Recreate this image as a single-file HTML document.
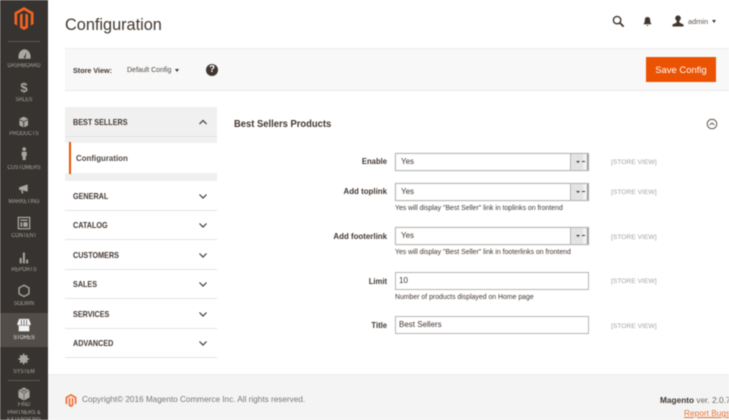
<!DOCTYPE html>
<html><head><meta charset="utf-8"><style>
html,body{margin:0;padding:0;background:#fff}
body{width:729px;height:420px;overflow:hidden;position:relative;font-family:"Liberation Sans",sans-serif;color:#41362f}
#w{position:absolute;left:0;top:0;width:729px;height:420px;overflow:hidden;filter:blur(.4px)}
.a{position:absolute;white-space:nowrap}
.nl{position:absolute;left:0;width:48px;margin-top:1px;text-align:center;font-size:6px;color:#aaa6a0;line-height:8px;transform:scaleX(.87);white-space:nowrap}
.nv{position:absolute;left:0;top:0;width:48px;height:420px;background:#373330}
.ni{position:absolute;left:17.3px;width:13.4px;height:12px}
.sec{position:absolute;left:73px;font-size:8.3px;font-weight:bold;color:#41362f;line-height:12px;transform:scaleX(.87);transform-origin:left;white-space:nowrap}
.row{position:absolute;left:65px;width:152px;height:1px;background:#e3e3e3}
.chev{position:absolute;left:198px;width:10px;height:6px}
.lab{position:absolute;width:157px;left:230px;text-align:right;font-size:8.6px;font-weight:bold;color:#41362f;line-height:12px;transform:scaleX(.89);transform-origin:right;white-space:nowrap}
.inp{position:absolute;left:395px;width:192px;height:16px;border:1px solid #b5b5b5;background:#fff;font-size:8px;line-height:16px;text-indent:3px;color:#41362f}
.sel{text-indent:5px;box-shadow:0 0 1px #ccc}
.btn{position:absolute;left:570px;width:18px;height:16px;background:linear-gradient(90deg,#e3e3e3 0,#e3e3e3 72%,#f1f1f1 72%,#f1f1f1 94%,#8d8d8d 94%);border-left:1px solid #b5b5b5;box-sizing:border-box}
.note{position:absolute;left:395px;font-size:6.9px;color:#41362f;line-height:10px;white-space:nowrap}
.sv{position:absolute;left:611px;font-size:6.7px;color:#a4a4a4;line-height:10px;white-space:nowrap}
</style></head><body><div id="w">
<div class="nv"></div>
<svg class="a" style="left:14px;top:7px" width="20" height="23" viewBox="0 0 20 23"><path d="M10 0L19.5 5.5V17L16.8 18.6V7L10 3.1 3.2 7V18.6L.5 17V5.5Z" fill="#f26322"/><path d="M10 23L6 20.7V7.8L8.6 6.4V19L10 19.8 11.4 19V6.4L14 7.8V20.7Z" fill="#f26322"/></svg>
<div class="a" style="left:8px;top:41px;width:32px;height:1px;background:#5c5854"></div>

<svg class="ni" style="left:15.5px;top:46px;width:17px;height:15.3px" viewBox="0 0 20 18"><path d="M3 15A7.2 9 0 1 1 17 15Z" fill="#aaa6a0"/><path d="M9 14L12.5 7 11 14.5Z" fill="#373330"/></svg>
<div class="nl" style="top:61px">DASHBOARD</div>
<div class="a" style="left:0;width:48px;top:80px;text-align:center;font-size:13px;font-weight:bold;color:#aaa6a0;line-height:15px">$</div>
<div class="nl" style="top:95px">SALES</div>
<svg class="ni" style="top:115.5px" viewBox="0 0 20 18"><path d="M10 1L17 4.5 10 8 3 4.5Z" fill="#aaa6a0"/><path d="M3.5 6L9.3 9V17L3.5 14ZM16.5 6L10.7 9V17L16.5 14Z" fill="#aaa6a0"/></svg>
<div class="nl" style="top:129px">PRODUCTS</div>
<svg class="ni" style="left:16.8px;top:147px;width:14.4px;height:13px" viewBox="0 0 20 18"><circle cx="10" cy="3" r="2.6" fill="#aaa6a0"/><path d="M6.5 6.5H13.5V12.5H12.2V18H7.8V12.5H6.5Z" fill="#aaa6a0"/></svg>
<div class="nl" style="top:163px">CUSTOMERS</div>
<svg class="ni" style="top:183px" viewBox="0 0 20 18"><path d="M3 6.5L16 2V13L3 10Z" fill="#aaa6a0"/><path d="M6 11L8.5 11.5 9.5 15.5 7 15.5Z" fill="#aaa6a0"/></svg>
<div class="nl" style="top:197px">MARKETING</div>
<svg class="ni" style="left:15px;top:215px;width:18px;height:16.2px" viewBox="0 0 20 18"><rect x="3.7" y="2.7" width="12.6" height="12.6" fill="none" stroke="#aaa6a0" stroke-width="1.4"/><path d="M6 5H14V6.5H6ZM6 8H8V13H6ZM9.2 8H14V13H9.2Z" fill="#aaa6a0"/></svg>
<div class="nl" style="top:231px">CONTENT</div>
<svg class="ni" style="top:251.5px" viewBox="0 0 20 18"><path d="M4 9H7V17H4ZM8.8 1H11.8V17H8.8ZM13.6 11.5H16.6V17H13.6Z" fill="#aaa6a0"/></svg>
<div class="nl" style="top:265px">REPORTS</div>
<svg class="ni" style="left:15px;top:283px;width:18px;height:16.2px" viewBox="0 0 20 18"><path d="M10 2.5L15.5 5.5V12L10 15 4.5 12V5.5Z" fill="none" stroke="#aaa6a0" stroke-width="1.5"/></svg>
<div class="nl" style="top:299px">SOLWIN</div>
<div class="a" style="left:0;top:313px;width:48px;height:34px;background:#524d49"></div>
<svg class="ni" style="left:15px;top:318px;width:18px;height:16px" viewBox="0 0 20 18"><path d="M4.5 1H15.5L17.5 6.5V8H2.5V6.5Z" fill="#f3f3f3"/><path d="M4 8.5H16V15H4Z" fill="#f3f3f3"/><path d="M7 2V8M10 2V8M13 2V8" stroke="#524d49" stroke-width=".8"/></svg>
<div class="nl" style="top:333px;color:#f0efee">STORES</div>
<svg class="ni" style="top:353px" viewBox="0 0 20 18"><circle cx="10" cy="9" r="4.5" fill="none" stroke="#aaa6a0" stroke-width="3"/><path d="M10 1V17M2 9H18M4.5 3.5L15.5 14.5M15.5 3.5L4.5 14.5" stroke="#aaa6a0" stroke-width="2.2"/></svg>
<div class="nl" style="top:367px">SYSTEM</div>
<div class="a" style="left:8px;top:380px;width:32px;height:1px;background:#5c5854"></div>
<svg class="ni" style="left:16px;top:386.5px;width:16px;height:14.4px" viewBox="0 0 20 18"><path d="M10 .5L17 4V13L10 17 3 13V4Z" fill="#aaa6a0"/><path d="M3 4L10 8 17 4M10 8V17M6 2.5L13 6M14 2.5L7 6" stroke="#373330" stroke-width=".6" fill="none"/></svg>
<div class="nl" style="top:400px">FIND</div>
<div class="nl" style="top:407.5px">PARTNERS &amp;</div>
<div class="nl" style="top:415px">EXTENSIONS</div>

<div class="a" style="left:65px;top:14px;font-size:16.3px;line-height:22px;color:#41362f">Configuration</div>
<svg class="a" style="left:612px;top:15px" width="13" height="13" viewBox="0 0 14 14"><circle cx="5.5" cy="5.5" r="4" fill="none" stroke="#41362f" stroke-width="1.5"/><path d="M8.5 8.5L12.5 12.5" stroke="#41362f" stroke-width="2"/></svg>
<svg class="a" style="left:643px;top:16px" width="9" height="11" viewBox="0 0 10 12"><path d="M5 1C7.5 1 8 3 8 5C8 7 9 8 9.5 9H.5C1 8 2 7 2 5C2 3 2.5 1 5 1Z" fill="#41362f"/><path d="M3.7 10H6.3L5 11.3Z" fill="#41362f"/></svg>
<svg class="a" style="left:672px;top:15px" width="12" height="12" viewBox="0 0 12 12"><circle cx="6" cy="3.2" r="2.8" fill="#41362f"/><path d="M4.6 5.5H7.4V7.5L11.5 9.5V11.5H.5V9.5L4.6 7.5Z" fill="#41362f"/></svg>
<div class="a" style="left:688px;top:16.5px;font-size:7.4px;color:#5c5450;line-height:10px">admin</div>
<div class="a" style="left:712px;top:20px;width:0;height:0;border:2.5px solid transparent;border-top:3px solid #41362f;border-bottom:0"></div>

<div class="a" style="left:65px;top:48px;width:664px;height:43px;background:#f8f8f8;border-top:1px solid #efefef;border-bottom:1px solid #e9e9e9;box-sizing:border-box"></div>
<div class="a" style="left:73px;top:65.5px;font-size:7.2px;font-weight:bold;line-height:10px;color:#41362f">Store View:</div>
<div class="a" style="left:127px;top:65.5px;font-size:7px;line-height:10px;color:#514943">Default Config</div>
<div class="a" style="left:175px;top:69px;width:0;height:0;border:2.8px solid transparent;border-top:3px solid #41362f;border-bottom:0"></div>
<div class="a" style="left:206px;top:63.5px;width:12px;height:12px;border-radius:50%;background:#41362f;color:#fff;text-align:center;font-size:10px;font-weight:bold;line-height:12px">?</div>
<div class="a" style="left:646px;top:57px;width:70px;height:25px;background:#eb5202;border:0;color:#fff;text-align:center;font-size:9.4px;line-height:25px;letter-spacing:.05px">Save Config</div>

<div class="a" style="left:65px;top:107px;width:152px;height:74px;background:#f0f0f0"></div>
<div class="row" style="top:136px"></div>
<div class="sec" style="top:116px">BEST SELLERS</div>
<svg class="chev" style="top:119px" viewBox="0 0 10 6"><path d="M1.5 5L5 1.5 8.5 5" fill="none" stroke="#41362f" stroke-width="1.2"/></svg>
<div class="a" style="left:65px;top:142.5px;width:152px;height:30.5px;background:#fff"></div>
<div class="a" style="left:69px;top:142px;width:2px;height:32px;background:#eb5202"></div>
<div class="a" style="left:76px;top:152px;font-size:8.6px;font-weight:bold;line-height:12px;color:#514943;transform:scaleX(.92);transform-origin:left">Configuration</div>

<div class="a" style="left:65px;top:181px;width:152px;height:177px;background:#fff"></div>
<div class="sec" style="top:189.5px">GENERAL</div>
<svg class="chev" style="top:193px" viewBox="0 0 10 6"><path d="M1.5 1.5L5 5 8.5 1.5" fill="none" stroke="#41362f" stroke-width="1.2"/></svg>
<div class="row" style="top:210px"></div>
<div class="sec" style="top:219px">CATALOG</div>
<svg class="chev" style="top:222px" viewBox="0 0 10 6"><path d="M1.5 1.5L5 5 8.5 1.5" fill="none" stroke="#41362f" stroke-width="1.2"/></svg>
<div class="row" style="top:239px"></div>
<div class="sec" style="top:248.5px">CUSTOMERS</div>
<svg class="chev" style="top:252px" viewBox="0 0 10 6"><path d="M1.5 1.5L5 5 8.5 1.5" fill="none" stroke="#41362f" stroke-width="1.2"/></svg>
<div class="row" style="top:269px"></div>
<div class="sec" style="top:278px">SALES</div>
<svg class="chev" style="top:281px" viewBox="0 0 10 6"><path d="M1.5 1.5L5 5 8.5 1.5" fill="none" stroke="#41362f" stroke-width="1.2"/></svg>
<div class="row" style="top:298px"></div>
<div class="sec" style="top:307.5px">SERVICES</div>
<svg class="chev" style="top:311px" viewBox="0 0 10 6"><path d="M1.5 1.5L5 5 8.5 1.5" fill="none" stroke="#41362f" stroke-width="1.2"/></svg>
<div class="row" style="top:328px"></div>
<div class="sec" style="top:336.5px">ADVANCED</div>
<svg class="chev" style="top:340px" viewBox="0 0 10 6"><path d="M1.5 1.5L5 5 8.5 1.5" fill="none" stroke="#41362f" stroke-width="1.2"/></svg>
<div class="row" style="top:357px"></div>

<div class="a" style="left:234px;top:118px;font-size:9.8px;font-weight:bold;line-height:13px;color:#41362f;transform:scaleX(.96);transform-origin:left">Best Sellers Products</div>
<svg class="a" style="left:706px;top:118px" width="12" height="12" viewBox="0 0 12 12"><circle cx="6" cy="6" r="4.8" fill="none" stroke="#5f5750" stroke-width="1"/><path d="M3.8 7L6 4.8 8.2 7" fill="none" stroke="#5f5750" stroke-width="1"/></svg>

<div class="lab" style="top:155px">Enable</div>
<div class="inp sel" style="top:153px">Yes</div>
<div class="btn" style="top:154px"></div>
<div class="a" style="left:576px;top:161px;width:0;height:0;border:2px solid transparent;border-top:2.5px solid #41362f;border-bottom:0"></div>
<div class="a" style="left:582px;top:160.5px;width:3px;height:1.5px;background:#41362f"></div>
<div class="sv" style="top:158px">[STORE VIEW]</div>

<div class="lab" style="top:185px;transform:scaleX(.92)">Add toplink</div>
<div class="inp sel" style="top:183px">Yes</div>
<div class="btn" style="top:184px"></div>
<div class="a" style="left:576px;top:191px;width:0;height:0;border:2px solid transparent;border-top:2.5px solid #41362f;border-bottom:0"></div>
<div class="a" style="left:582px;top:190.5px;width:3px;height:1.5px;background:#41362f"></div>
<div class="note" style="top:204px">Yes will display "Best Seller" link in toplinks on frontend</div>
<div class="sv" style="top:188px">[STORE VIEW]</div>

<div class="lab" style="top:230px;transform:scaleX(.92)">Add footerlink</div>
<div class="inp sel" style="top:227px">Yes</div>
<div class="btn" style="top:228px"></div>
<div class="a" style="left:576px;top:235px;width:0;height:0;border:2px solid transparent;border-top:2.5px solid #41362f;border-bottom:0"></div>
<div class="a" style="left:582px;top:234.5px;width:3px;height:1.5px;background:#41362f"></div>
<div class="note" style="top:248px">Yes will display "Best Seller" link in footerlinks on frontend</div>
<div class="sv" style="top:233px">[STORE VIEW]</div>

<div class="lab" style="top:275px">Limit</div>
<div class="inp" style="top:272px">10</div>
<div class="note" style="top:293px">Number of products displayed on Home page</div>
<div class="sv" style="top:277px">[STORE VIEW]</div>

<div class="lab" style="top:319px">Title</div>
<div class="inp" style="top:316px">Best Sellers</div>
<div class="sv" style="top:322px">[STORE VIEW]</div>

<div class="a" style="left:48px;top:374px;width:681px;height:46px;background:#f4f4f4;border-top:1px solid #eee;box-sizing:border-box"></div>
<svg class="a" style="left:65px;top:394px" width="12" height="13" viewBox="0 0 20 23"><path d="M10 0L19.5 5.5V17L16.8 18.6V7L10 3.1 3.2 7V18.6L.5 17V5.5Z" fill="#f26322"/><path d="M10 23L6 20.7V7.8L8.6 6.4V19L10 19.8 11.4 19V6.4L14 7.8V20.7Z" fill="#f26322"/></svg>
<div class="a" style="left:82px;top:394px;font-size:8.2px;line-height:12px;color:#7d7672">Copyright© 2016 Magento Commerce Inc. All rights reserved.</div>
<div class="a" style="left:660px;top:394px;font-size:8.3px;line-height:12px;color:#6d6560"><b style="color:#41362f">Magento</b> ver. 2.0.7</div>
<div class="a" style="left:684px;top:407px;font-size:8.3px;line-height:12px;color:#eb5202;text-decoration:underline;opacity:.8">Report Bugs</div>
</div></body></html>
